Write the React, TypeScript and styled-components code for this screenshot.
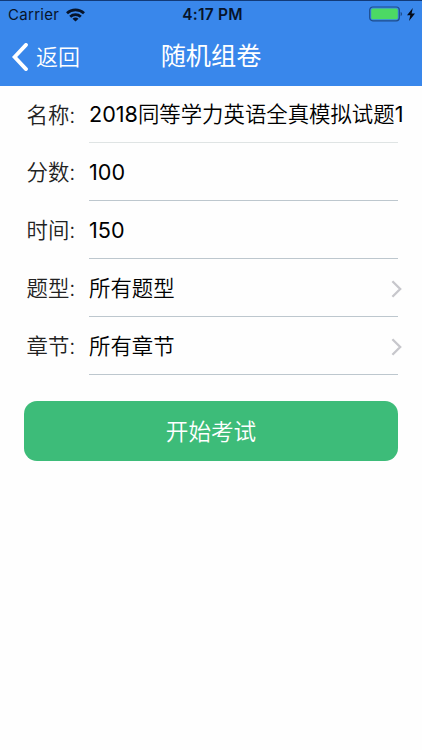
import React from "react";
import styled, { createGlobalStyle } from "styled-components";

const GlobalStyle = createGlobalStyle`
  * { box-sizing: border-box; }
  html, body { margin: 0; background: #fefefe; }
  body { font-family: Inter, "Noto Sans CJK SC", sans-serif; }
`;

const Screen = styled.main`
  width: 422px;
  height: 750px;
  overflow: hidden;
  background: #fefefe;
`;

const Header = styled.header`
  height: 86px;
  background: #3987eb;
  border-top: 1px solid #123a78;
`;

const StatusBar = styled.div`
  height: 26px;
  display: grid;
  grid-template-columns: 1fr auto 1fr;
  align-items: center;
  padding: 1px 7px 0 8px;
  color: #07142a;
  font-size: 15px;
  line-height: 26px;
`;

const Carrier = styled.div`
  display: flex;
  align-items: center;
  gap: 7px;
  letter-spacing: 0.3px;
`;

const Clock = styled.div`
  font-weight: 600;
  font-size: 15.5px;
  letter-spacing: 0.2px;
  padding-left: 2px;
`;

const Power = styled.div`
  display: flex;
  justify-content: flex-end;
  align-items: center;
  gap: 4px;
  padding-bottom: 2px;
`;

const NavBar = styled.nav`
  height: 59px;
  display: grid;
  grid-template-columns: 1fr auto 1fr;
  align-items: center;
  color: #fff;
`;

const BackButton = styled.button`
  display: flex;
  align-items: center;
  gap: 8px;
  padding: 0 0 0 12px;
  border: 0;
  background: none;
  color: #fff;
  font: 350 22px/32px "Noto Sans CJK SC", sans-serif;
`;

const BackText = styled.span`
  padding-bottom: 4px;
`;

const Title = styled.h1`
  margin: 0;
  padding-bottom: 5px;
  font: 400 25.2px/36px "Noto Sans CJK SC", sans-serif;
`;

const Row = styled.div<{ $first?: boolean }>`
  height: ${(p) => (p.$first ? 57 : 58)}px;
  display: flex;
  padding: 0 24px 0 26.5px;
`;

const Label = styled.span`
  width: 62.5px;
  flex: none;
  display: flex;
  align-items: center;
  padding-bottom: 3px;
  color: #222;
  font-size: 21.4px;
  font-weight: 350;
`;

const Value = styled.div<{ $faint?: boolean }>`
  flex: 1;
  min-width: 0;
  display: flex;
  align-items: center;
  justify-content: space-between;
  border-bottom: 1px solid ${(p) => (p.$faint ? "#dfe4e4" : "#bdc7ce")};
  color: #000;
  font-size: 21.4px;
  font-weight: 350;
  white-space: nowrap;
`;

const ValueText = styled.span<{ $cjk?: boolean }>`
  padding-bottom: ${(p) => (p.$cjk ? 3 : 0)}px;
`;

const Digits = styled.span`
  font-size: 21.6px;
  font-weight: 400;
`;

const StartButton = styled.button`
  display: block;
  width: 374px;
  height: 60px;
  margin: 26px 0 0 24px;
  padding: 0;
  border: 0;
  border-radius: 13px;
  background: #3dbc79;
  color: #fff;
  font: 350 22.6px/60px "Noto Sans CJK SC", sans-serif;
`;

const WifiIcon = () => (
  <svg width="19" height="14" viewBox="0 0 19 14" fill="none" stroke="#07142a" strokeWidth="2.8">
    <path d="M1 5.2C5.8.8 13.2.8 18 5.2" />
    <path d="M4.2 8.7c3-2.7 7.6-2.7 10.6 0" />
    <path d="M9.5 13.6 6.5 10.7c1.7-1.5 4.3-1.5 6 0z" fill="#07142a" stroke="none" />
  </svg>
);

const BatteryIcon = () => (
  <svg width="34" height="16" viewBox="0 0 34 16">
    <rect x="0.7" y="1" width="29.6" height="13.8" rx="3" fill="none" stroke="#1e4c8c" strokeWidth="1.2" />
    <rect x="2.2" y="2.6" width="26.6" height="10.6" rx="1.5" fill="#4cd964" />
    <path d="M31.6 5.8c2 .8 2 3.6 0 4.4z" fill="#1e4c8c" />
  </svg>
);

const BoltIcon = () => (
  <svg width="8" height="13" viewBox="0 0 8 13" fill="#050b18">
    <path d="M5.8 0 0 7.2h3.3L2 13l6-7.6H4.6z" />
  </svg>
);

const BackIcon = () => (
  <svg width="16" height="28" viewBox="0 0 16 28" fill="none" stroke="#fff" strokeWidth="3.8">
    <path d="M14 1.9 2.6 14 14 26.1" strokeLinecap="round" />
  </svg>
);

const Chevron = styled.svg`
  margin: 2px -4px 0 0;
  flex: none;
`;

const ChevronIcon = () => (
  <Chevron width="11" height="18" viewBox="0 0 11 18" fill="none" stroke="#c7c7cc" strokeWidth="2.3">
    <path d="m1.4 1.2 7.8 7.8-7.8 7.8" />
  </Chevron>
);

type Field = { label: string; value: React.ReactNode; cjk?: boolean; select?: boolean };

const fields: Field[] = [
  { label: "名称:", value: <><Digits>2018</Digits>同等学力英语全真模拟试题<Digits>1</Digits></>, cjk: true },
  { label: "分数:", value: <Digits>100</Digits> },
  { label: "时间:", value: <Digits>150</Digits> },
  { label: "题型:", value: "所有题型", cjk: true, select: true },
  { label: "章节:", value: "所有章节", cjk: true, select: true },
];

export default function App() {
  return (
    <Screen>
      <GlobalStyle />
      <Header>
        <StatusBar>
          <Carrier>Carrier<WifiIcon /></Carrier>
          <Clock>4:17 PM</Clock>
          <Power><BatteryIcon /><BoltIcon /></Power>
        </StatusBar>
        <NavBar>
          <BackButton><BackIcon /><BackText>返回</BackText></BackButton>
          <Title>随机组卷</Title>
        </NavBar>
      </Header>
      {fields.map((field, i) => (
        <Row key={field.label} $first={i === 0}>
          <Label>{field.label}</Label>
          <Value $faint={i === 0}>
            <ValueText $cjk={field.cjk}>{field.value}</ValueText>
            {field.select && <ChevronIcon />}
          </Value>
        </Row>
      ))}
      <StartButton>开始考试</StartButton>
    </Screen>
  );
}
